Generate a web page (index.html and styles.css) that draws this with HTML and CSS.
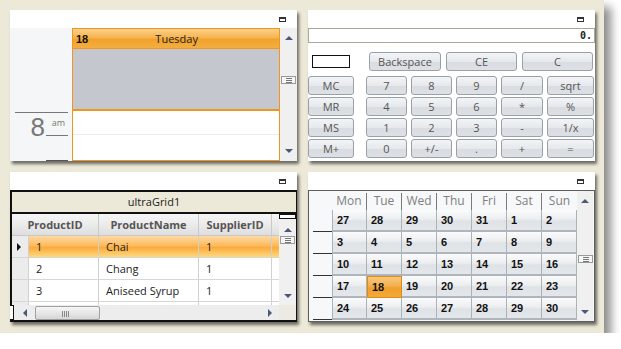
FILE: index.html
```html
<!DOCTYPE html>
<html lang="en">
<head>
    <meta charset="UTF-8">
    <title>Controls</title>
    <link rel="stylesheet" href="styles.css">
</head>
<body>
<div class="desk">
    <!-- day view -->
    <div class="panel">
        <div class="cap"><span class="max"></span></div>
        <div class="body dayview">
            <div class="times">
                <div class="hr"></div>
                <div class="hour">
                    <span class="big">8</span>
                    <span class="mark">am</span>
                </div>
                <div class="next"></div>
            </div>
            <div class="day">
                <div class="dhead"><b>18</b><span>Tuesday</span></div>
                <div class="allday"></div>
                <div class="slot first"></div>
                <div class="slot"></div>
            </div>
            <div class="vs">
                <span class="up"></span>
                <span class="grip"></span>
                <span class="down"></span>
            </div>
        </div>
    </div>

    <!-- calculator -->
    <div class="panel">
        <div class="cap"><span class="max"></span></div>
        <div class="body calc">
            <div class="display">0.</div>
            <div class="toprow">
                <span class="membox"></span>
                <button class="key wide">Backspace</button>
                <button class="key wide">CE</button>
                <button class="key wide">C</button>
            </div>
            <div class="keys">
                <button class="key mem">MC</button>
                <button class="key">7</button>
                <button class="key">8</button>
                <button class="key">9</button>
                <button class="key">/</button>
                <button class="key">sqrt</button>
                <button class="key mem">MR</button>
                <button class="key">4</button>
                <button class="key">5</button>
                <button class="key">6</button>
                <button class="key">*</button>
                <button class="key">%</button>
                <button class="key mem">MS</button>
                <button class="key">1</button>
                <button class="key">2</button>
                <button class="key">3</button>
                <button class="key">-</button>
                <button class="key">1/x</button>
                <button class="key mem">M+</button>
                <button class="key">0</button>
                <button class="key">+/-</button>
                <button class="key">.</button>
                <button class="key">+</button>
                <button class="key">=</button>
            </div>
        </div>
    </div>

    <!-- grid -->
    <div class="panel">
        <div class="cap"><span class="max"></span></div>
        <div class="body ugrid">
            <div class="gcap">ultraGrid1</div>
            <div class="garea">
                <div class="table">
                    <div class="ghead">
                        <span class="c1">ProductID</span>
                        <span class="c2">ProductName</span>
                        <span class="c3">SupplierID</span>
                        <span class="c4"></span>
                    </div>
                    <div class="grow sel">
                        <span class="rs"><i class="tri"></i></span>
                        <span class="c1">1</span>
                        <span class="c2">Chai</span>
                        <span class="c3">1</span>
                        <span class="c4"></span>
                    </div>
                    <div class="grow">
                        <span class="rs"></span>
                        <span class="c1">2</span>
                        <span class="c2">Chang</span>
                        <span class="c3">1</span>
                        <span class="c4"></span>
                    </div>
                    <div class="grow">
                        <span class="rs"></span>
                        <span class="c1">3</span>
                        <span class="c2">Aniseed Syrup</span>
                        <span class="c3">1</span>
                        <span class="c4"></span>
                    </div>
                    <div class="grow">
                        <span class="rs"></span>
                        <span class="c1"></span>
                        <span class="c2"></span>
                        <span class="c3"></span>
                        <span class="c4"></span>
                    </div>
                </div>
                <div class="vs gvs">
                    <span class="split"></span>
                    <span class="up"></span>
                    <span class="grip"></span>
                    <span class="down"></span>
                </div>
                <div class="hs">
                    <span class="hsplit"></span>
                    <span class="left"></span>
                    <span class="thumb"></span>
                    <span class="right"></span>
                </div>
                <div class="corner"></div>
            </div>
        </div>
    </div>

    <!-- month -->
    <div class="panel">
        <div class="cap"><span class="max"></span></div>
        <div class="body month">
            <div class="cal">
                <span class="wk"></span>
                <span class="dn">Mon</span><span class="dn">Tue</span><span class="dn">Wed</span><span class="dn">Thu</span><span class="dn">Fri</span><span class="dn">Sat</span><span class="dn last">Sun</span>

                <span class="wk tick"></span>
                <span class="d">27</span><span class="d">28</span><span class="d">29</span><span class="d">30</span><span class="d">31</span><span class="d">1</span><span class="d">2</span>

                <span class="wk tick"></span>
                <span class="d">3</span><span class="d">4</span><span class="d">5</span><span class="d">6</span><span class="d">7</span><span class="d">8</span><span class="d">9</span>

                <span class="wk tick"></span>
                <span class="d">10</span><span class="d">11</span><span class="d">12</span><span class="d">13</span><span class="d">14</span><span class="d">15</span><span class="d">16</span>

                <span class="wk tick"></span>
                <span class="d">17</span><span class="d today">18</span><span class="d">19</span><span class="d">20</span><span class="d">21</span><span class="d">22</span><span class="d">23</span>

                <span class="wk tick"></span>
                <span class="d">24</span><span class="d">25</span><span class="d">26</span><span class="d">27</span><span class="d">28</span><span class="d">29</span><span class="d">30</span>
            </div>
            <div class="vs mvs">
                <span class="up"></span>
                <span class="grip"></span>
                <span class="down"></span>
            </div>
        </div>
    </div>
</div>
</body>
</html>
```

FILE: styles.css
```css
*{
    margin: 0;
    padding: 0;
    box-sizing: border-box;
}
body{
    background: #fff;
    font-family: "Open Sans", "Noto Sans", sans-serif;
    font-size: 11px;
}
.desk{
    width: 604px;
    height: 333px;
    background: #ece9d8;
    box-shadow: 7px 7px 9px rgba(0,0,0,.45);
    padding: 10px;
    display: grid;
    grid-template-columns: 287px 287px;
    grid-template-rows: 151px 150px;
    gap: 11px;
}
.panel{
    background: #fff;
    display: flex;
    flex-direction: column;
    box-shadow: 2px 3px 3px rgba(0,0,0,.55);
}
.cap{
    height: 18px;
    flex: none;
    display: flex;
    justify-content: flex-end;
    align-items: center;
    padding-right: 11px;
}
.max{
    width: 7px;
    height: 5px;
    border: 1px solid #333;
    border-top-width: 2px;
}
.body{
    flex: 1;
    display: flex;
    min-height: 0;
}

/* scrollbars */
.vs{
    width: 17px;
    flex: none;
    background: #f0f0f0;
    display: flex;
    flex-direction: column;
    align-items: center;
}
.up,.down{
    width: 0;
    height: 0;
    border-left: 4px solid transparent;
    border-right: 4px solid transparent;
}
.up{
    border-bottom: 4px solid #4b5878;
}
.down{
    border-top: 4px solid #4b5878;
    margin-top: auto;
}
.grip{
    width: 15px;
    height: 8px;
    border: 1px solid #9a9a9a;
    background:
        linear-gradient(#777,#777) 4px 1px/6px 1px no-repeat,
        linear-gradient(#777,#777) 4px 3px/6px 1px no-repeat,
        linear-gradient(#777,#777) 4px 5px/6px 1px no-repeat,
        #f7f7f7;
}

/* day view */
.dayview .vs{
    padding: 8px 0 8px;
}
.dayview .grip{
    margin-top: 36px;
}
.times{
    width: 62px;
    background: #f5f6f8;
    padding-top: 84px;
    display: flex;
    flex-direction: column;
}
.hr{
    height: 1px;
    margin: 0 4px 0 5px;
    background: #777;
}
.hour{
    display: flex;
    justify-content: flex-end;
    padding-right: 4px;
    height: 24px;
}
.big{
    font-family: "Liberation Sans", sans-serif;
    font-size: 26px;
    line-height: 28px;
    color: #777;
    margin-right: 1px;
}
.mark{
    width: 22px;
    height: 23px;
    border-bottom: 1px solid #777;
    font-size: 9px;
    color: #777;
    text-align: right;
    padding-right: 3px;
    line-height: 14px;
    padding-top: 3px;
}
.next{
    margin: auto 4px 0 36px;
    height: 1px;
    background: #555;
}
.day{
    width: 208px;
    border: 1px solid #f0961e;
    display: flex;
    flex-direction: column;
}
.dhead{
    height: 20px;
    border-bottom: 1px solid #f0961e;
    background: linear-gradient(#fbd08a, #f6b451 45%, #f2a22c 55%, #f3ae40);
    display: flex;
    align-items: center;
    padding-left: 3px;
    position: relative;
}
.dhead b{
    font-family: "Liberation Sans", sans-serif;
    font-size: 11px;
    color: #111;
}
.dhead span{
    flex: 1;
    text-align: center;
    color: #222;
    font-size: 11px;
    margin-right: 14px;
}
.allday{
    height: 62px;
    background: #c4c7ce;
    border-bottom: 2px solid #f0961e;
}
.slot{
    height: 24px;
    background: #fff;
}
.slot.first{
    border-bottom: 1px solid #ececec;
}

/* calculator */
.calc{
    flex-direction: column;
}
.display{
    height: 15px;
    border: 1px solid #aca893;
    text-align: right;
    padding-right: 2px;
    font-family: "DejaVu Sans Mono", monospace;
    font-weight: bold;
    font-size: 10px;
    line-height: 13px;
    color: #222;
}
.toprow{
    display: flex;
    align-items: center;
    gap: 5px;
    margin-top: 9px;
    height: 19px;
}
.membox{
    width: 38px;
    height: 13px;
    border: 1px solid #111;
    margin: 0 14px 0 4px;
}
.key{
    height: 19px;
    border: 1px solid #97a1aa;
    border-radius: 3px;
    background: linear-gradient(#f2f4f6, #e6e9ec 50%, #d9dde1 55%, #dde1e5);
    font-family: "Open Sans", "Noto Sans", sans-serif;
    font-size: 11px;
    color: #555;
    line-height: 16px;
}
.key.wide{
    width: 71px;
}
.key.wide:first-of-type{
    width: 72px;
}
.keys{
    display: grid;
    grid-template-columns: 54px 41px 41px 41px 42px 47px;
    grid-auto-rows: 19px;
    column-gap: 4px;
    row-gap: 2px;
    margin-top: 5px;
}
.key.mem{
    width: 46px;
}

/* grid */
.ugrid{
    flex-direction: column;
    border: 2px solid #111;
    border-right-width: 1px;
}
.gcap{
    height: 22px;
    background: #ece9d8;
    border-bottom: 2px solid #111;
    text-align: center;
    line-height: 20px;
    color: #222;
}
.garea{
    flex: 1;
    display: grid;
    grid-template-columns: 1fr 17px;
    grid-template-rows: 91px 1fr;
    min-height: 0;
}
.table{
    overflow: hidden;
    background: #fff;
}
.ghead,.grow{
    display: flex;
    height: 22px;
}
.ghead{
    background: linear-gradient(#f6f6f6, #e9e9e9 60%, #dedede);
    border-bottom: 1px solid #c9c9c9;
    font-weight: bold;
    color: #555;
}
.ghead span{
    border-right: 1px solid #c9c9c9;
    text-align: center;
    line-height: 21px;
}
.ghead .c1{ width: 87px; }
.ghead .c2{ width: 100px; }
.ghead .c3{ width: 73px; }
.ghead .c4{ flex: 1; border-right: 0; }
.grow{
    border-bottom: 1px solid #d6d6d6;
    color: #222;
}
.grow span{
    border-right: 1px solid #d0d0d0;
    line-height: 21px;
    padding-left: 7px;
}
.grow .rs{
    width: 17px;
    background: #ececec;
    padding: 0;
    display: flex;
    align-items: center;
    padding-left: 5px;
}
.tri{
    border-top: 4px solid transparent;
    border-bottom: 4px solid transparent;
    border-left: 4px solid #111;
}
.grow .c1{ width: 70px; }
.grow .c2{ width: 100px; }
.grow .c3{ width: 73px; }
.grow .c4{ flex: 1; border-right: 0; }
.grow.sel{
    background: linear-gradient(#fed9a4, #fcbb5e 45%, #fbab3c 55%, #fed97f);
}
.gvs{
    padding-bottom: 7px;
}
.gvs .split{
    width: 17px;
    height: 5px;
    border: 1px solid #111;
    background: #fff;
    margin-bottom: 9px;
}
.gvs .grip{
    margin-top: 4px;
}
.hs{
    background: #ededed;
    display: flex;
    align-items: center;
    position: relative;
}
.hsplit{
    width: 4px;
    height: 100%;
    border: 1px solid #111;
    border-left: 0;
    margin-left: -2px;
    margin-right: 9px;
    background: #fff;
}
.left,.right{
    width: 0;
    height: 0;
    border-top: 4px solid transparent;
    border-bottom: 4px solid transparent;
}
.left{
    border-right: 4px solid #4b5878;
}
.right{
    border-left: 4px solid #4b5878;
    margin: 0 7px 0 auto;
}
.thumb{
    width: 65px;
    height: 14px;
    margin-left: 8px;
    border: 1px solid #a0a0a0;
    border-radius: 2px;
    background:
        linear-gradient(#888,#888) 26px 4px/1px 6px no-repeat,
        linear-gradient(#888,#888) 28px 4px/1px 6px no-repeat,
        linear-gradient(#888,#888) 30px 4px/1px 6px no-repeat,
        linear-gradient(#888,#888) 32px 4px/1px 6px no-repeat,
        linear-gradient(#f7f7f7, #e6e6e6 50%, #d6d6d6);
}
.corner{
    background: #eceae2;
}

/* month */
.month{
    border: 1px solid #5e5e5e;
    background: #f7f8fa;
}
.cal{
    display: grid;
    grid-template-columns: 23px repeat(7, 35px);
    grid-template-rows: 19px repeat(5, 22px);
    align-content: start;
    overflow: hidden;
}
.dn{
    text-align: center;
    color: #808080;
    font-size: 12px;
    line-height: 19px;
    border-right: 1px solid #7a7a7a;
    margin-top: 2px;
    line-height: 16px;
}
.dn.last{
    border-right: 0;
}
.wk.tick{
    border-bottom: 1px solid #333;
    margin-left: 4px;
}
.d{
    border-right: 1px solid #aab2ba;
    border-bottom: 2px solid #aeb5bd;
    background: linear-gradient(#fbfbfc, #eceef0 45%, #dfe2e6 55%, #e4e7ea);
    font-family: "Liberation Sans", sans-serif;
    font-weight: bold;
    font-size: 11px;
    color: #111;
    padding-left: 4px;
    line-height: 20px;
}
.cal .d:nth-child(8n+2){
    border-left: 1px solid #aab2ba;
}
.d.today{
    background: linear-gradient(#f9c77e, #f4b04e 45%, #f0a02c 55%, #f2a93a);
    border: 1px solid #e08a12;
}
.mvs{
    width: 16px;
    padding: 8px 0 7px;
}
.mvs .grip{
    margin-top: 52px;
}
```
